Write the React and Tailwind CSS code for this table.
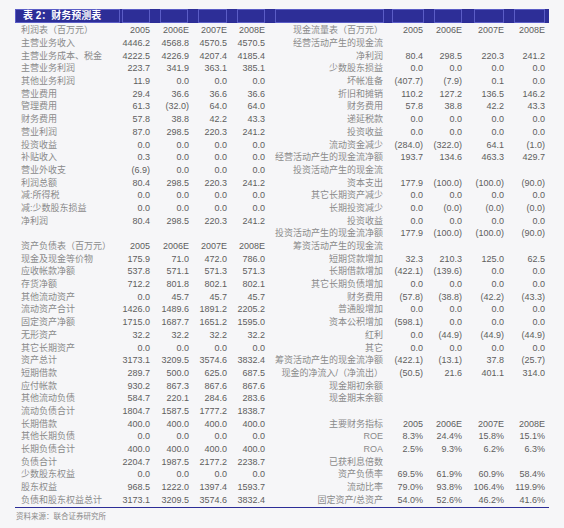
const YEARS = ["2005", "2006E", "2007E", "2008E"];
const Z = ["0.0", "0.0", "0.0", "0.0"];

const leftRows = [
  ["利润表（百万元）", YEARS],
  ["主营业务收入", ["4446.2", "4568.8", "4570.5", "4570.5"]],
  ["主营业务成本、税金", ["4222.5", "4226.9", "4207.4", "4185.4"]],
  ["主营业务利润", ["223.7", "341.9", "363.1", "385.1"]],
  ["其他业务利润", ["11.9", "0.0", "0.0", "0.0"]],
  ["营业费用", ["29.4", "36.6", "36.6", "36.6"]],
  ["管理费用", ["61.3", "(32.0)", "64.0", "64.0"]],
  ["财务费用", ["57.8", "38.8", "42.2", "43.3"]],
  ["营业利润", ["87.0", "298.5", "220.3", "241.2"]],
  ["投资收益", Z],
  ["补贴收入", ["0.3", "0.0", "0.0", "0.0"]],
  ["营业外收支", ["(6.9)", "0.0", "0.0", "0.0"]],
  ["利润总额", ["80.4", "298.5", "220.3", "241.2"]],
  ["减:所得税", Z],
  ["减:少数股东损益", Z],
  ["净利润", ["80.4", "298.5", "220.3", "241.2"]],
  ["", []],
  ["资产负债表（百万元）", YEARS],
  ["现金及现金等价物", ["175.9", "71.0", "472.0", "786.0"]],
  ["应收帐款净额", ["537.8", "571.1", "571.3", "571.3"]],
  ["存货净额", ["712.2", "801.8", "802.1", "802.1"]],
  ["其他流动资产", ["0.0", "45.7", "45.7", "45.7"]],
  ["流动资产合计", ["1426.0", "1489.6", "1891.2", "2205.2"]],
  ["固定资产净额", ["1715.0", "1687.7", "1651.2", "1595.0"]],
  ["无形资产", ["32.2", "32.2", "32.2", "32.2"]],
  ["其它长期资产", Z],
  ["资产总计", ["3173.1", "3209.5", "3574.6", "3832.4"]],
  ["短期借款", ["289.7", "500.0", "625.0", "687.5"]],
  ["应付帐款", ["930.2", "867.3", "867.6", "867.6"]],
  ["其他流动负债", ["584.7", "220.1", "284.6", "283.6"]],
  ["流动负债合计", ["1804.7", "1587.5", "1777.2", "1838.7"]],
  ["长期借款", ["400.0", "400.0", "400.0", "400.0"]],
  ["其他长期负债", Z],
  ["长期负债合计", ["400.0", "400.0", "400.0", "400.0"]],
  ["负债合计", ["2204.7", "1987.5", "2177.2", "2238.7"]],
  ["少数股东权益", Z],
  ["股东权益", ["968.5", "1222.0", "1397.4", "1593.7"]],
  ["负债和股东权益总计", ["3173.1", "3209.5", "3574.6", "3832.4"]],
];

const rightRows = [
  ["现金流量表（百万元）", YEARS],
  ["经营活动产生的现金流", []],
  ["净利润", ["80.4", "298.5", "220.3", "241.2"]],
  ["少数股东损益", Z],
  ["坏帐准备", ["(407.7)", "(7.9)", "0.1", "0.0"]],
  ["折旧和摊销", ["110.2", "127.2", "136.5", "146.2"]],
  ["财务费用", ["57.8", "38.8", "42.2", "43.3"]],
  ["递延税款", Z],
  ["投资收益", Z],
  ["流动资金减少", ["(284.0)", "(322.0)", "64.1", "(1.0)"]],
  ["经营活动产生的现金流净额", ["193.7", "134.6", "463.3", "429.7"]],
  ["投资活动产生的现金流", []],
  ["资本支出", ["177.9", "(100.0)", "(100.0)", "(90.0)"]],
  ["其它长期资产减少", Z],
  ["长期投资减少", ["0.0", "(0.0)", "(0.0)", "(0.0)"]],
  ["投资收益", Z],
  ["投资活动产生的现金流净额", ["177.9", "(100.0)", "(100.0)", "(90.0)"]],
  ["筹资活动产生的现金流", []],
  ["短期贷款增加", ["32.3", "210.3", "125.0", "62.5"]],
  ["长期借款增加", ["(422.1)", "(139.6)", "0.0", "0.0"]],
  ["其它长期负债增加", Z],
  ["财务费用", ["(57.8)", "(38.8)", "(42.2)", "(43.3)"]],
  ["普通股增加", Z],
  ["资本公积增加", ["(598.1)", "0.0", "0.0", "0.0"]],
  ["红利", ["0.0", "(44.9)", "(44.9)", "(44.9)"]],
  ["其它", Z],
  ["筹资活动产生的现金流净额", ["(422.1)", "(13.1)", "37.8", "(25.7)"]],
  ["现金的净流入/（净流出）", ["(50.5)", "21.6", "401.1", "314.0"]],
  ["现金期初余额", []],
  ["现金期末余额", []],
  ["", []],
  ["主要财务指标", YEARS],
  ["ROE", ["8.3%", "24.4%", "15.8%", "15.1%"]],
  ["ROA", ["2.5%", "9.3%", "6.2%", "6.3%"]],
  ["已获利息倍数", []],
  ["资产负债率", ["69.5%", "61.9%", "60.9%", "58.4%"]],
  ["流动比率", ["79.0%", "93.8%", "106.4%", "119.9%"]],
  ["固定资产/总资产", ["54.0%", "52.6%", "46.2%", "41.6%"]],
];

const LEFT_COLS = ["w-[38px]", "w-[39px]", "w-[38px]", "w-[38px]"];
const RIGHT_COLS = ["w-[40px]", "w-[39px]", "w-[42px]", "w-[41px]"];

const HeaderBox = ({ className }) => (
  <div className={`h-full border border-[#5b5dc6] ${className}`} />
);

const HeaderBar = () => (
  <div className="ml-[15px] flex h-[14px] w-[534px] bg-[#2d2e97]">
    <div className="flex h-full w-[105px] items-center border border-[#5b5dc6] pl-[7px] text-[10px] font-bold leading-none text-white">
      表 2：财务预测表
    </div>
    <HeaderBox className="ml-[2px] w-[28px]" />
    <HeaderBox className="ml-[10px] w-[28px]" />
    <HeaderBox className="ml-[10px] w-[29px]" />
    <HeaderBox className="ml-[10px] w-[28px]" />
    <HeaderBox className="ml-[10px] w-[109px]" />
    <HeaderBox className="ml-[8px] w-[32px]" />
    <HeaderBox className="ml-[10px] w-[28px]" />
    <HeaderBox className="ml-[12px] w-[30px]" />
    <HeaderBox className="ml-[10px] w-[31px]" />
  </div>
);

const Table = ({ rows, labelClass, cols }) => (
  <div className="flex flex-col">
    {rows.map(([label, values], i) => (
      <div key={i} className="flex h-[12.7px] items-center whitespace-nowrap leading-none">
        <div className={`flex shrink-0 ${labelClass} text-[9px] text-[#8a8a8a]`}>
          <span>{label}</span>
        </div>
        {cols.map((w, j) => (
          <div key={j} className={`${w} shrink-0 text-right text-[9px] text-[#5e5e5e]`}>
            {values[j] || ""}
          </div>
        ))}
      </div>
    ))}
  </div>
);

export default function App() {
  return (
    <div
      className="h-[528px] w-[564px] overflow-hidden bg-[#f6f6f8] pt-[9px]"
      style={{ fontFamily: '"Liberation Sans", "Noto Sans CJK SC", sans-serif' }}
    >
      <HeaderBar />
      <div className="ml-[15px] mt-[1.5px] flex">
        <Table rows={leftRows} labelClass="w-[97px] pl-[6px]" cols={LEFT_COLS} />
        <div className="ml-[10px]">
          <Table rows={rightRows} labelClass="w-[108px] justify-end" cols={RIGHT_COLS} />
        </div>
      </div>
      <div className="ml-[15px] h-[1.5px] w-[534px] bg-[#2d2e97]" />
      <div className="ml-[16px] mt-[5px] text-[7.5px] leading-none text-[#8a8a8a]">
        资料来源：联合证券研究所
      </div>
    </div>
  );
}
